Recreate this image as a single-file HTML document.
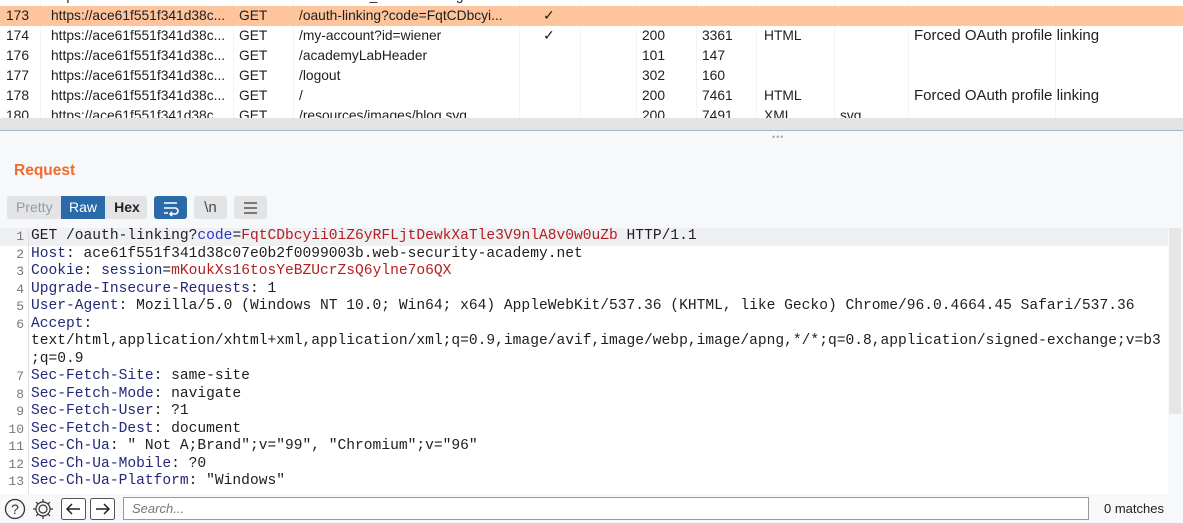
<!DOCTYPE html>
<html><head><style>
*{margin:0;padding:0;box-sizing:border-box}
body{width:1183px;height:523px;overflow:hidden;background:#f7f8fa;font-family:"Liberation Sans",sans-serif;position:relative;color:#1e1e1e}
.tbl{position:absolute;left:0;top:0;width:1183px;height:118px;background:#fff;overflow:hidden}
.row{position:absolute;left:0;width:1183px;height:20px;font-size:13.8px;line-height:20px}
.row span{position:absolute;white-space:nowrap}
.t{font-size:15px}
.sel{background:#fec49c}
.vl{position:absolute;top:0;height:118px;width:1px;background:#f3f4f6}
.gbar{position:absolute;left:0;top:118px;width:1183px;height:13px;background:#e3e4e6;border-bottom:1px solid #a9b6c6}
.req{position:absolute;left:14px;top:162px;color:#f26b2d;font-weight:bold;font-size:15.5px}
.btns{position:absolute;top:196px;height:23px;font-size:14px;line-height:23px}
.code{position:absolute;left:0;top:228px;width:1168px;height:266px;background:#fff;font-family:"Liberation Mono",monospace;font-size:14.6px;overflow:hidden}
.ln{position:absolute;left:0;width:1168px;height:17.5px;line-height:17.5px;white-space:pre}
.ln b{font-weight:normal;position:absolute;left:0;top:0;width:24px;text-align:right;color:#777;font-size:13px;line-height:17.5px}
.ln i{font-style:normal;position:absolute;left:31px;top:0}
.k{color:#22277a}.v{color:#b41e1e}.p{color:#2a36c8}
.gut{position:absolute;left:28px;top:228px;width:1px;height:266px;background:#e0e0e0}
.bot{position:absolute;left:0;top:494px;width:1183px;height:29px;background:#f7f8fa}
</style></head><body>
<div class="tbl">
<div class="vl" style="left:40px"></div><div class="vl" style="left:233px"></div><div class="vl" style="left:293px"></div><div class="vl" style="left:519px"></div><div class="vl" style="left:580px"></div><div class="vl" style="left:636px"></div><div class="vl" style="left:696px"></div><div class="vl" style="left:756px"></div><div class="vl" style="left:834px"></div><div class="vl" style="left:908px"></div><div class="vl" style="left:1055px"></div>
<div class="row" style="top:-14px"><span style="left:6px">172</span><span style="left:51px">https://oauth-ac8a1e7d4...</span><span style="left:239px">GET</span><span style="left:299px">/auth?client_id=kseocd4rtgu6...</span><span style="left:543px">✓</span><span style="left:642px">302</span><span style="left:702px">302</span><span style="left:764px">HTML</span></div>
<div class="row sel" style="top:6px"><span style="left:6px">173</span><span style="left:51px">https://ace61f551f341d38c...</span><span style="left:239px">GET</span><span style="left:299px">/oauth-linking?code=FqtCDbcyi...</span><span style="left:543px">✓</span></div>
<div class="row" style="top:26px"><span style="left:6px">174</span><span style="left:51px">https://ace61f551f341d38c...</span><span style="left:239px">GET</span><span style="left:299px">/my-account?id=wiener</span><span style="left:543px">✓</span><span style="left:642px">200</span><span style="left:702px">3361</span><span style="left:764px">HTML</span><span class="t" style="left:914px">Forced OAuth profile linking</span></div>
<div class="row" style="top:46px"><span style="left:6px">176</span><span style="left:51px">https://ace61f551f341d38c...</span><span style="left:239px">GET</span><span style="left:299px">/academyLabHeader</span><span style="left:642px">101</span><span style="left:702px">147</span></div>
<div class="row" style="top:66px"><span style="left:6px">177</span><span style="left:51px">https://ace61f551f341d38c...</span><span style="left:239px">GET</span><span style="left:299px">/logout</span><span style="left:642px">302</span><span style="left:702px">160</span></div>
<div class="row" style="top:86px"><span style="left:6px">178</span><span style="left:51px">https://ace61f551f341d38c...</span><span style="left:239px">GET</span><span style="left:299px">/</span><span style="left:642px">200</span><span style="left:702px">7461</span><span style="left:764px">HTML</span><span class="t" style="left:914px">Forced OAuth profile linking</span></div>
<div class="row" style="top:106px"><span style="left:6px">180</span><span style="left:51px">https://ace61f551f341d38c...</span><span style="left:239px">GET</span><span style="left:299px">/resources/images/blog.svg</span><span style="left:642px">200</span><span style="left:702px">7491</span><span style="left:764px">XML</span><span style="left:840px">svg</span></div>
</div>
<div class="gbar"></div>
<div style="position:absolute;left:772px;top:132px;font-size:9px;color:#aab;letter-spacing:1px">•••</div>
<div class="req">Request</div>
<div class="btns" style="left:7px;width:140px;background:#e3e4e6;border-radius:3px"></div>
<div class="btns" style="left:16px;color:#9a9a9a">Pretty</div>
<div class="btns" style="left:61px;width:44px;background:#2b6aa8;color:#fff;text-align:center">Raw</div>
<div class="btns" style="left:107px;width:40px;text-align:center;font-weight:bold;color:#222">Hex</div>
<div class="btns" style="left:154px;width:33px;background:#2b6aa8;border-radius:3px"><svg width="33" height="23"><path d="M10 7h13M10 12h11a3 3 0 0 1 0 6h-5M18 16l-2 2 2 2M10 17h4" stroke="#fff" stroke-width="1.6" fill="none"/></svg></div>
<div class="btns" style="left:194px;width:33px;background:#e3e4e6;border-radius:3px;text-align:center;color:#444;font-size:15px">\n</div>
<div class="btns" style="left:234px;width:33px;background:#e3e4e6;border-radius:3px"><svg width="33" height="23"><path d="M10 7h13M10 12h13M10 17h13" stroke="#555" stroke-width="1.6"/></svg></div>
<div class="code">
<div class="ln" style="top:0;background:#eef0f4"><b>1</b><i>GET /oauth-linking?<span class="p">code</span>=<span class="v">FqtCDbcyii0iZ6yRFLjtDewkXaTle3V9nlA8v0w0uZb</span> HTTP/1.1</i></div>
<div class="ln" style="top:17.5px"><b>2</b><i><span class="k">Host</span>: ace61f551f341d38c07e0b2f0099003b.web-security-academy.net</i></div>
<div class="ln" style="top:35px"><b>3</b><i><span class="k">Cookie</span>: <span class="k">session</span>=<span class="v">mKoukXs16tosYeBZUcrZsQ6ylne7o6QX</span></i></div>
<div class="ln" style="top:52.5px"><b>4</b><i><span class="k">Upgrade-Insecure-Requests</span>: 1</i></div>
<div class="ln" style="top:70px"><b>5</b><i><span class="k">User-Agent</span>: Mozilla/5.0 (Windows NT 10.0; Win64; x64) AppleWebKit/537.36 (KHTML, like Gecko) Chrome/96.0.4664.45 Safari/537.36</i></div>
<div class="ln" style="top:87.5px"><b>6</b><i><span class="k">Accept</span>:</i></div>
<div class="ln" style="top:105px"><i>text/html,application/xhtml+xml,application/xml;q=0.9,image/avif,image/webp,image/apng,*/*;q=0.8,application/signed-exchange;v=b3</i></div>
<div class="ln" style="top:122.5px"><i>;q=0.9</i></div>
<div class="ln" style="top:140px"><b>7</b><i><span class="k">Sec-Fetch-Site</span>: same-site</i></div>
<div class="ln" style="top:157.5px"><b>8</b><i><span class="k">Sec-Fetch-Mode</span>: navigate</i></div>
<div class="ln" style="top:175px"><b>9</b><i><span class="k">Sec-Fetch-User</span>: ?1</i></div>
<div class="ln" style="top:192.5px"><b>10</b><i><span class="k">Sec-Fetch-Dest</span>: document</i></div>
<div class="ln" style="top:210px"><b>11</b><i><span class="k">Sec-Ch-Ua</span>: " Not A;Brand";v="99", "Chromium";v="96"</i></div>
<div class="ln" style="top:227.5px"><b>12</b><i><span class="k">Sec-Ch-Ua-Mobile</span>: ?0</i></div>
<div class="ln" style="top:245px"><b>13</b><i><span class="k">Sec-Ch-Ua-Platform</span>: "Windows"</i></div>
</div>
<div class="gut"></div>
<div style="position:absolute;left:1169px;top:228px;width:12px;height:186px;background:#e6e6e6"></div>
<div class="bot">
<svg style="position:absolute;left:3px;top:3px" width="115" height="24"><circle cx="12" cy="12" r="9.5" stroke="#333" stroke-width="1.3" fill="none"/><text x="12" y="17" text-anchor="middle" font-family="Liberation Sans" font-size="14" fill="#333">?</text>
<g transform="translate(40,12)" stroke="#333" stroke-width="1.2" fill="none"><circle r="4"/><path d="M0-10v3M0 7v3M-10 0h3M7 0h3M-7-7l2 2M5 5l2 2M-7 7l2-2M5-5l2-2"/><circle r="7"/></g>
<rect x="58.5" y="1.5" width="24" height="21" rx="2" stroke="#555" fill="#fff"/><path d="M77 12H64M69 7l-5 5 5 5" stroke="#222" stroke-width="1.5" fill="none"/>
<rect x="87.5" y="1.5" width="24" height="21" rx="2" stroke="#555" fill="#fff"/><path d="M93 12h13M101 7l5 5-5 5" stroke="#222" stroke-width="1.5" fill="none"/></svg>
<div style="position:absolute;left:123px;top:3px;width:966px;height:23px;background:#fff;border:1px solid #999;font-size:13px;font-style:italic;color:#777;line-height:21px;padding-left:8px">Search...</div>
<div style="position:absolute;left:1104px;top:7px;font-size:13px;color:#222">0 matches</div>
</div>
</body></html>
